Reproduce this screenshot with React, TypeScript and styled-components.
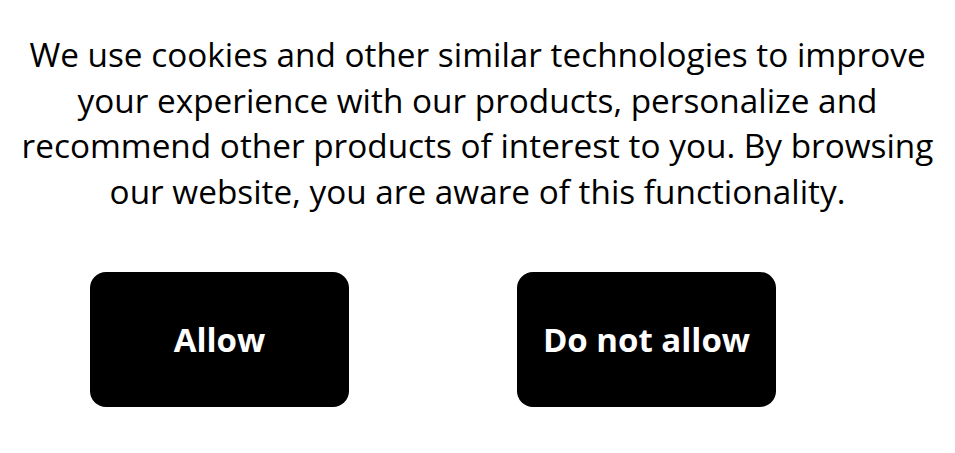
import React from "react";
import styled, { createGlobalStyle } from "styled-components";

const GlobalStyle = createGlobalStyle`
  html, body {
    margin: 0;
    padding: 0;
    background: #fff;
  }
  body {
    font-family: "Open Sans", "Noto Sans", sans-serif;
    color: #000;
  }
`;

const Banner = styled.div`
  width: 955px;
  height: 453px;
  padding-top: 32px;
  box-sizing: border-box;
`;

const Message = styled.p`
  margin: 0;
  padding: 0 8px;
  text-align: center;
  font-size: 33.35px;
  line-height: 45.5px;
  font-weight: 400;
`;

const Actions = styled.div`
  display: flex;
  gap: 168px;
  margin-top: 58px;
  padding-left: 90px;
`;

const ChoiceButton = styled.button`
  width: 259px;
  height: 135px;
  border: none;
  border-radius: 16px;
  background: #000;
  color: #fff;
  font-family: "Open Sans", "Noto Sans", sans-serif;
  font-size: 33px;
  font-weight: 700;
  cursor: pointer;
`;

const App = () => {
  return (
    <>
      <GlobalStyle />
      <Banner>
        <Message>
          We use cookies and other similar technologies to improve your experience with our
          products, personalize and recommend other products of interest to you. By browsing
          our website, you are aware of this functionality.
        </Message>
        <Actions>
          <ChoiceButton>Allow</ChoiceButton>
          <ChoiceButton>Do not allow</ChoiceButton>
        </Actions>
      </Banner>
    </>
  );
};

export default App;
